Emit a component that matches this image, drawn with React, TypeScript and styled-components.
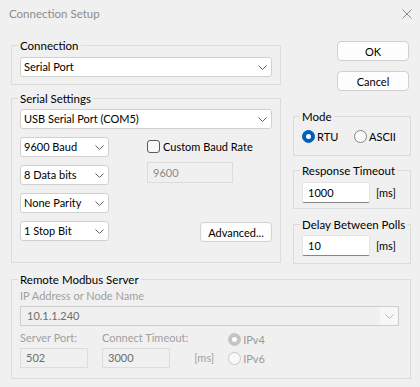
import React from "react";
import styled, {createGlobalStyle} from "styled-components";

const GlobalStyle = createGlobalStyle`
  * {
    box-sizing: border-box;
  }
  body {
    margin: 0;
    font-family: Lato, "Noto Sans", sans-serif;
    font-size: 11px;
    color: #000;
    background: #f0f0f0;
  }
`;

const Window = styled.div`
  width: 420px;
  height: 387px;
  background: #f0f0f0;
  display: flex;
  flex-direction: column;
  overflow: hidden;
`;

const TitleBar = styled.div`
  height: 27px;
  flex-shrink: 0;
  display: flex;
  align-items: center;
  justify-content: space-between;
  padding: 0 8px 0 9px;
  color: #8c8c8c;
  font-size: 11.5px;
`;

const Body = styled.div`
  padding: 11px 9px 0 11px;
  display: flex;
  flex-direction: column;
`;

const TopRow = styled.div`
  display: flex;
  gap: 12px;
`;

const LeftCol = styled.div`
  width: 270px;
  display: flex;
  flex-direction: column;
  gap: 6px;
`;

const RightCol = styled.div`
  width: 118px;
  display: flex;
  flex-direction: column;
`;

const Group = styled.fieldset<{$pad: string; $mt?: number}>`
  margin: ${(p) => p.$mt || 0}px 0 0 0;
  min-width: 0;
  border: 1px solid #dcdcdc;
  padding: ${(p) => p.$pad};
`;

const Legend = styled.legend`
  padding: 0 2px;
  margin-left: -2px;
  line-height: 15px;
  font-size: 11.5px;
  white-space: nowrap;
  color: #000;
`;

const Select = styled.div<{$w?: number; $h?: number}>`
  width: ${(p) => (p.$w ? `${p.$w}px` : "100%")};
  height: ${(p) => p.$h || 20}px;
  background: #fff;
  border: 1px solid #d0d0d0;
  border-radius: 3px;
  display: flex;
  align-items: center;
  justify-content: space-between;
  padding: 0 4px 0 3px;
  line-height: 18px;
  white-space: nowrap;
`;

const Combo = styled.div`
  height: 20px;
  background: #f3f3f3;
  border: 1px solid #cccccc;
  display: flex;
  align-items: stretch;
  margin-top: 3px;
`;

const ComboText = styled.div`
  flex: 1;
  margin: 1px 0 1px 1px;
  background: #f0f0f0;
  color: #6d6d6d;
  padding-left: 5px;
  line-height: 16px;
`;

const ComboButton = styled.div`
  width: 18px;
  display: flex;
  align-items: center;
  justify-content: center;
  background: #f7f7f7;
`;

const Chevron: React.FC<{color?: string}> = ({color = "#606060"}) => (
  <svg width="9" height="5" viewBox="0 0 9 5">
    <path d="M0.5 0.5 L4.5 4.5 L8.5 0.5" fill="none" stroke={color} strokeWidth="1"/>
  </svg>
);

const SerialGrid = styled.div`
  display: grid;
  grid-template-columns: 89px 1fr;
  grid-auto-rows: 20px;
  column-gap: 38px;
  row-gap: 8px;
  margin-top: 8px;
`;

const CheckRow = styled.label`
  display: flex;
  align-items: center;
  gap: 3px;
  margin-top: -1px;
`;

const CheckBox = styled.span`
  width: 13px;
  height: 13px;
  border: 1px solid #5a5a5a;
  border-radius: 3px;
  background: #f8f8f8;
`;

const ReadOnlyField = styled.div<{$w: number; $h?: number; $dark?: boolean}>`
  width: ${(p) => p.$w}px;
  height: ${(p) => p.$h || 21}px;
  background: #f0f0f0;
  border: 1px solid #dcdcdc;
  color: ${(p) => (p.$dark ? "#6d6d6d" : "#8a8a8a")};
  padding-left: 5px;
  line-height: ${(p) => (p.$h || 21) - 2}px;
`;

const BaudField = styled(ReadOnlyField)`
  margin-top: -3px;
`;

const Button = styled.div<{$mt?: number}>`
  width: 72px;
  height: 20px;
  margin-top: ${(p) => p.$mt || 0}px;
  background: #fdfdfd;
  border: 1px solid #d0d0d0;
  border-radius: 4px;
  display: flex;
  align-items: center;
  justify-content: center;
`;

const SideButton = styled(Button)`
  align-self: flex-end;
  margin-right: 2px;
`;

const AdvancedButton = styled(Button)`
  justify-self: end;
  margin-top: 1px;
`;

const RadioRow = styled.div`
  display: flex;
  align-items: center;
  height: 15px;
`;

const RadioItem = styled.label<{$w?: number; $disabled?: boolean}>`
  display: flex;
  align-items: center;
  gap: 2px;
  width: ${(p) => (p.$w ? `${p.$w}px` : "auto")};
  color: ${(p) => (p.$disabled ? "#9a9a9a" : "#000")};
`;

const RadioDot = styled.span<{$checked?: boolean; $disabled?: boolean}>`
  width: 13px;
  height: 13px;
  border-radius: 50%;
  display: flex;
  align-items: center;
  justify-content: center;
  background: ${(p) =>
    p.$checked ? (p.$disabled ? "#c4c4c4" : "#005fb8") : "#f9f9f9"};
  border: 1px solid
    ${(p) => (p.$checked ? (p.$disabled ? "#c4c4c4" : "#005fb8") : p.$disabled ? "#c8c8c8" : "#868686")};

  &::after {
    content: "";
    display: ${(p) => (p.$checked ? "block" : "none")};
    width: 5px;
    height: 5px;
    border-radius: 50%;
    background: #fff;
  }
`;

const InputRow = styled.div`
  display: flex;
  align-items: center;
  gap: 6px;
`;

const TextInput = styled.div<{$h: number}>`
  width: 68px;
  height: ${(p) => p.$h}px;
  background: #fff;
  border: 1px solid #e5e5e5;
  border-bottom-color: #868686;
  border-radius: 2px;
  padding-left: 5px;
  line-height: ${(p) => p.$h - 2}px;
`;

const Unit = styled.span`
  color: #000;
`;

const DisabledLabel = styled.div`
  color: #a0a0a0;
  line-height: 15px;
`;

const BottomRow = styled.div`
  display: flex;
  margin-top: 4px;
`;

const Field = styled.div<{$ml?: number}>`
  display: flex;
  flex-direction: column;
  gap: 3px;
  margin-left: ${(p) => p.$ml || 0}px;
`;

const MsUnit = styled.div`
  align-self: flex-end;
  height: 20px;
  line-height: 20px;
  margin-left: 6px;
  color: #a0a0a0;
`;

const IpRadios = styled.div`
  display: flex;
  flex-direction: column;
  gap: 4px;
  margin: 2px 0 0 14px;
`;

const CloseIcon = () => (
  <svg width="10" height="10" viewBox="0 0 10 10">
    <path d="M0.5 0.5 L9.5 9.5 M9.5 0.5 L0.5 9.5" stroke="#8c8c8c" strokeWidth="1"/>
  </svg>
);

const ParamSelect: React.FC<{label: string}> = ({label}) => (
  <Select $w={89}>
    <span>{label}</span>
    <Chevron/>
  </Select>
);

const App: React.FC = () => {
  return (
    <Window>
      <GlobalStyle/>
      <TitleBar>
        <span>Connection Setup</span>
        <CloseIcon/>
      </TitleBar>
      <Body>
        <TopRow>
          <LeftCol>
            <Group $pad="4px 8px 7px 8px">
              <Legend>Connection</Legend>
              <Select>
                <span>Serial Port</span>
                <Chevron/>
              </Select>
            </Group>
            <Group $pad="3px 8px 21px 8px">
              <Legend>Serial Settings</Legend>
              <Select>
                <span>USB Serial Port (COM5)</span>
                <Chevron/>
              </Select>
              <SerialGrid>
                <ParamSelect label="9600 Baud"/>
                <CheckRow>
                  <CheckBox/>
                  <span>Custom Baud Rate</span>
                </CheckRow>
                <ParamSelect label="8 Data bits"/>
                <BaudField $w={86}>9600</BaudField>
                <ParamSelect label="None Parity"/>
                <span/>
                <ParamSelect label="1 Stop Bit"/>
                <AdvancedButton>Advanced...</AdvancedButton>
              </SerialGrid>
            </Group>
          </LeftCol>
          <RightCol>
            <SideButton $mt={3}>OK</SideButton>
            <SideButton $mt={10}>Cancel</SideButton>
            <Group $pad="5px 8px 11px 8px" $mt={18}>
              <Legend>Mode</Legend>
              <RadioRow>
                <RadioItem $w={52}>
                  <RadioDot $checked/>
                  RTU
                </RadioItem>
                <RadioItem>
                  <RadioDot/>
                  ASCII
                </RadioItem>
              </RadioRow>
            </Group>
            <Group $pad="4px 8px 5px 8px" $mt={7}>
              <Legend>Response Timeout</Legend>
              <InputRow>
                <TextInput $h={21}>1000</TextInput>
                <Unit>[ms]</Unit>
              </InputRow>
            </Group>
            <Group $pad="3px 8px 7px 8px" $mt={8}>
              <Legend>Delay Between Polls</Legend>
              <InputRow>
                <TextInput $h={21}>10</TextInput>
                <Unit>[ms]</Unit>
              </InputRow>
            </Group>
          </RightCol>
        </TopRow>
        <Group $pad="1px 11px 10px 8px" $mt={8}>
          <Legend>Remote Modbus Server</Legend>
          <DisabledLabel>IP Address or Node Name</DisabledLabel>
          <Combo>
            <ComboText>10.1.1.240</ComboText>
            <ComboButton>
              <Chevron color="#b5b5b5"/>
            </ComboButton>
          </Combo>
          <BottomRow>
            <Field>
              <DisabledLabel>Server Port:</DisabledLabel>
              <ReadOnlyField $w={68} $h={20} $dark>502</ReadOnlyField>
            </Field>
            <Field $ml={14}>
              <DisabledLabel>Connect Timeout:</DisabledLabel>
              <ReadOnlyField $w={68} $h={20} $dark>3000</ReadOnlyField>
            </Field>
            <MsUnit>[ms]</MsUnit>
            <IpRadios>
              <RadioRow>
                <RadioItem $disabled>
                  <RadioDot $checked $disabled/>
                  IPv4
                </RadioItem>
              </RadioRow>
              <RadioRow>
                <RadioItem $disabled>
                  <RadioDot $disabled/>
                  IPv6
                </RadioItem>
              </RadioRow>
            </IpRadios>
          </BottomRow>
        </Group>
      </Body>
    </Window>
  );
};

export default App;
